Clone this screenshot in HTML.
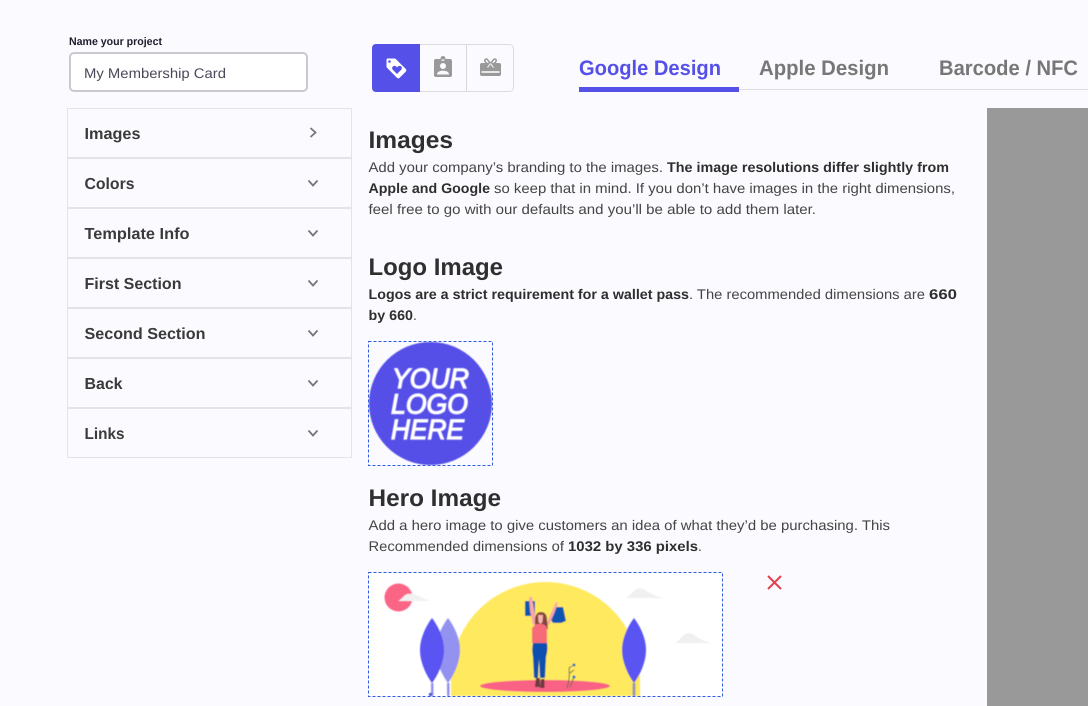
<!DOCTYPE html>
<html lang="en"><head><meta charset="utf-8"><title>My Membership Card</title>
<style>
html,body{margin:0;padding:0;width:1088px;height:706px;overflow:hidden;background:#fbfbff}
svg{display:block;position:absolute;left:0;top:0}
text{font-family:"Liberation Sans",Arial,sans-serif;fill:#333;text-rendering:geometricPrecision}
.b{font-size:14px;fill:#454545}
.bb{font-size:14px;font-weight:700;fill:#2e2e2e}
.h{font-size:24px;font-weight:700;fill:#2f2f2f}
.a{font-size:16px;font-weight:700;fill:#3a3a3a}
.tab{font-size:21px;font-weight:700;fill:#777}
.logo{font-size:28px;font-style:italic;fill:#fff;stroke:#fff;stroke-width:1.200px}
</style></head><body>
<svg width="1088" height="706" viewBox="0 0 1088 706" xmlns="http://www.w3.org/2000/svg">
<defs><filter id="soft" x="-5%" y="-5%" width="110%" height="110%"><feGaussianBlur stdDeviation="0.45"/></filter></defs>
<rect width="1088" height="706" fill="#fbfbff"/>
<rect x="987" y="108" width="101" height="598" fill="#999"/>

<text x="69" y="45" font-size="11" font-weight="700" style="fill:#1c1c2c" textLength="93" lengthAdjust="spacingAndGlyphs">Name your project</text>
<rect x="70" y="53" width="237" height="38" rx="4" fill="#fff" stroke="#c9cad0" stroke-width="2"/>
<text x="84" y="78" font-size="14" style="fill:#4a4a5a" textLength="142" lengthAdjust="spacingAndGlyphs">My Membership Card</text>

<rect x="67.500" y="108.500" width="284" height="349" fill="none" stroke="#e3e3e8"/>
<g fill="#e3e3e8"><rect x="68" y="157" width="283" height="2"/><rect x="68" y="207" width="283" height="2"/><rect x="68" y="257" width="283" height="2"/><rect x="68" y="307" width="283" height="2"/><rect x="68" y="357" width="283" height="2"/><rect x="68" y="407" width="283" height="2"/></g>
<text class="a" x="84.500" y="139" textLength="56" lengthAdjust="spacingAndGlyphs">Images</text>
<text class="a" x="84.500" y="189" textLength="50" lengthAdjust="spacingAndGlyphs">Colors</text>
<text class="a" x="84.500" y="239" textLength="105" lengthAdjust="spacingAndGlyphs">Template Info</text>
<text class="a" x="84.500" y="289" textLength="97" lengthAdjust="spacingAndGlyphs">First Section</text>
<text class="a" x="84.500" y="339" textLength="121" lengthAdjust="spacingAndGlyphs">Second Section</text>
<text class="a" x="84.500" y="389" textLength="38" lengthAdjust="spacingAndGlyphs">Back</text>
<text class="a" x="84.500" y="439" textLength="40" lengthAdjust="spacingAndGlyphs">Links</text>
<g fill="none" stroke="#777" stroke-width="1.800">
<path d="M310.500 128l5 4.500-5 4.500"/>
<path d="M308.500 180.500l4.500 5 4.500-5"/><path d="M308.500 230.500l4.500 5 4.500-5"/><path d="M308.500 280.500l4.500 5 4.500-5"/><path d="M308.500 330.500l4.500 5 4.500-5"/><path d="M308.500 380.500l4.500 5 4.500-5"/><path d="M308.500 430.500l4.500 5 4.500-5"/>
</g>

<rect x="372.500" y="44.500" width="141" height="47" rx="4" fill="#fbfbff" stroke="#dcdce0"/>
<path d="M376 44h44v48h-44a4 4 0 0 1-4-4V48a4 4 0 0 1 4-4z" fill="#5550e8"/>
<rect x="466" y="45" width="1" height="46" fill="#d8d8dc"/>
<path d="M388 58.500h6.500a2 2 0 0 1 1.400.6l9.800 9.800a2 2 0 0 1 0 2.800l-6 6a2 2 0 0 1-2.800 0l-9.800-9.800a2 2 0 0 1-.6-1.400V60a1.500 1.500 0 0 1 1.500-1.500z" fill="#fff"/>
<circle cx="389.500" cy="61.500" r="1.300" fill="#5550e8"/>
<path d="M397 74l-4.200-4.200a2.300 2.300 0 0 1 3.300-3.300l.9.900.9-.9a2.300 2.300 0 0 1 3.300 3.300z" fill="#5550e8"/>

<path d="M436 59h4.500v-.5a2.500 2.500 0 0 1 5 0v.5h4.500a2 2 0 0 1 2 2v14a2 2 0 0 1-2 2h-14a2 2 0 0 1-2-2V61a2 2 0 0 1 2-2z" fill="#999"/>
<circle cx="443" cy="66" r="3" fill="#fbfbff"/>
<path d="M437 74.500c0-2.500 2.500-3.800 6-3.800s6 1.300 6 3.800z" fill="#fbfbff"/>
<rect x="441.500" y="59.500" width="3" height="1.200" fill="#fbfbff"/>

<path d="M482 63h17a2 2 0 0 1 2 2v9a2 2 0 0 1-2 2h-17a2 2 0 0 1-2-2v-9a2 2 0 0 1 2-2z" fill="#999"/>
<rect x="481.500" y="71" width="18" height="2" fill="#e6e6ea"/>
<path d="M490.500 63.500l-3.200-4.100a1.600 1.600 0 0 0-2.500 1.700l2 2.400zM490.500 63.500l3.200-4.100a1.600 1.600 0 0 1 2.500 1.700l-2 2.400z" fill="#fbfbff" stroke="#999" stroke-width="1.500"/>
<path d="M490.500 63.500l-3 4M490.500 63.500l3 4" fill="none" stroke="#e6e6ea" stroke-width="1.300"/>

<text class="tab" x="579" y="75" textLength="142" lengthAdjust="spacingAndGlyphs" style="fill:#5550e8">Google Design</text>
<text class="tab" x="759" y="75" textLength="130" lengthAdjust="spacingAndGlyphs">Apple Design</text>
<text class="tab" x="939" y="75" textLength="139" lengthAdjust="spacingAndGlyphs">Barcode / NFC</text>
<rect x="579" y="89" width="509" height="1" fill="#dedee2"/>
<rect x="579" y="87" width="160" height="5" fill="#5550e8"/>

<text class="h" x="368.500" y="148" textLength="84.500" lengthAdjust="spacingAndGlyphs">Images</text>
<text class="b" x="368.500" y="172" textLength="294.500" lengthAdjust="spacingAndGlyphs">Add your company’s branding to the images.</text>
<text class="bb" x="667" y="172" textLength="282" lengthAdjust="spacingAndGlyphs">The image resolutions differ slightly from</text>
<text class="bb" x="368.500" y="193" textLength="121.500" lengthAdjust="spacingAndGlyphs">Apple and Google</text>
<text class="b" x="494" y="193" textLength="461" lengthAdjust="spacingAndGlyphs">so keep that in mind. If you don’t have images in the right dimensions,</text>
<text class="b" x="368.500" y="214" textLength="447.500" lengthAdjust="spacingAndGlyphs">feel free to go with our defaults and you’ll be able to add them later.</text>

<text class="h" x="368.500" y="275" textLength="134.500" lengthAdjust="spacingAndGlyphs">Logo Image</text>
<text class="bb" x="368.500" y="299" textLength="320.500" lengthAdjust="spacingAndGlyphs">Logos are a strict requirement for a wallet pass</text>
<text class="b" x="689" y="299" textLength="236" lengthAdjust="spacingAndGlyphs">. The recommended dimensions are</text>
<text class="bb" x="929" y="299" textLength="28" lengthAdjust="spacingAndGlyphs">660</text>
<text class="bb" x="368.500" y="320" textLength="44.500" lengthAdjust="spacingAndGlyphs">by 660</text>
<text class="b" x="413" y="320">.</text>

<circle cx="430.500" cy="403.500" r="61.500" fill="#5550e8" filter="url(#soft)"/>
<g filter="url(#soft)">
<text class="logo" x="392" y="388" textLength="77" lengthAdjust="spacingAndGlyphs">YOUR</text>
<text class="logo" x="391" y="413.500" textLength="77" lengthAdjust="spacingAndGlyphs">LOGO</text>
<text class="logo" x="391" y="439" textLength="73" lengthAdjust="spacingAndGlyphs">HERE</text>
</g>
<rect x="368.500" y="341.500" width="124" height="124" fill="none" stroke="#2f5be0" stroke-dasharray="3 2"/>

<text class="h" x="368.500" y="506" textLength="132.500" lengthAdjust="spacingAndGlyphs">Hero Image</text>
<text class="b" x="368.500" y="530" textLength="521.500" lengthAdjust="spacingAndGlyphs">Add a hero image to give customers an idea of what they’d be purchasing. This</text>
<text class="b" x="368.500" y="551" textLength="195.500" lengthAdjust="spacingAndGlyphs">Recommended dimensions of</text>
<text class="bb" x="568" y="551" textLength="130" lengthAdjust="spacingAndGlyphs">1032 by 336 pixels</text>
<text class="b" x="698" y="551">.</text>

<rect x="369" y="573" width="353" height="123" fill="#fff"/>
<g filter="url(#soft)">
<circle cx="398.500" cy="597.500" r="14" fill="#fb6585"/>
<path d="M398 601c3-1 5-5 9-7 5-1 10 1 14 3 4 2 7 3 10 4z" fill="#f1f1f3"/>
<path d="M451 696V677A94.500 95 0 0 1 640 677V696z" fill="#ffe95f"/>
<path d="M626 598c4-2 6-6 10-9 3-1 6-1 9 1 6 4 12 7 19 8z" fill="#f0f0f2"/>
<path d="M675 643c4-2 6-6 10-9 3-1 6-1 9 1 6 4 11 7 18 8z" fill="#f0f0f2"/>
<path d="M448 618c-6 8-12 20-12 32 0 12 6 25 12 33 6-8 12-21 12-33 0-12-6-24-12-32z" fill="#9492f0"/>
<rect x="447" y="683" width="2.500" height="13" fill="#9492f0"/>
<path d="M432 618c-6 8-12 20-12 32 0 12 6 25 12 33 6-8 12-21 12-33 0-12-6-24-12-32z" fill="#5a55f2"/>
<rect x="431" y="683" width="2.500" height="13" fill="#9492f0"/>
<rect x="429" y="693" width="3" height="3" fill="#3f55c8"/>
<path d="M634 618c-6 8-12 20-12 32 0 12 6 25 12 33 6-8 12-21 12-33 0-12-6-24-12-32z" fill="#5a55f2"/>
<rect x="632.500" y="683" width="3" height="13" fill="#9a98b0"/>
<ellipse cx="545" cy="686" rx="65" ry="6" fill="#f96285"/>
<rect x="525" y="601" width="10" height="15" fill="#0a55b0"/>
<path d="M554 607h9l3 14-5 2h-8l-2-3z" fill="#0a55b0"/>
<path d="M529 597h3l3 18 1 10h-3l-3-14zM558 603l-2-1-6 13-4 10 3 0 5-11z" fill="#f7a8a8"/>
<path d="M535 620c0-5 2-8 6-8s6 3 6 8l1 9h-13z" fill="#84443e"/>
<path d="M538 615h5l-.5 7-2 2-2-2z" fill="#f7b6ad"/>
<path d="M532 628l4-4h7l4 3v16h-15z" fill="#f76a78"/>
<path d="M533 643h14c1 6 0 10-1 14l-1 21h-5l-1-20-1 20h-4l-1-21c-1-5-1-9 0-14z" fill="#0d50b0"/>
<path d="M536 678h4v9h-5zM541 679h3.500l0 9h-4.500z" fill="#6b3a40"/>
<path d="M567 688c2-6 3-12 2-20M570 687c2-4 3-8 4-10M569 668l3-2M570 673l4-3" fill="none" stroke="#6a6a50" stroke-width="1"/>
<circle cx="574" cy="665" r="1.500" fill="#1a6fc0"/><circle cx="574" cy="677" r="1.500" fill="#1a6fc0"/>
</g>
<rect x="368.500" y="572.500" width="354" height="124" fill="none" stroke="#2f5be0" stroke-dasharray="3 2"/>
<path d="M768 576l13 13M781 576l-13 13" stroke="#e2414e" stroke-width="2" fill="none"/>
</svg>
</body></html>
